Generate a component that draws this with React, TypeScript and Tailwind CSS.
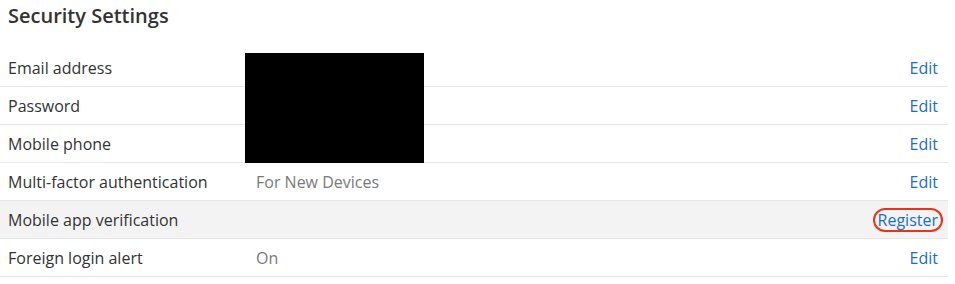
const rows = [
  { label: "Email address", value: "", action: "Edit" },
  { label: "Password", value: "", action: "Edit" },
  { label: "Mobile phone", value: "", action: "Edit" },
  { label: "Multi-factor authentication", value: "For New Devices", action: "Edit" },
  { label: "Mobile app verification", value: "", action: "Register", highlight: true },
  { label: "Foreign login alert", value: "On", action: "Edit" },
];

export default function App() {
  return (
    <div className="w-[948px] bg-white font-['Open_Sans',sans-serif] text-[#333]">
      <h2 className="h-[49px] pl-2 pt-[2px] text-[20px] font-semibold leading-[28px] text-[#333]">
        Security Settings
      </h2>
      <div className="relative">
        {rows.map((row) => (
          <div
            key={row.label}
            className={`flex h-[38px] items-center border-b border-[#e6e6e6] pr-[10px] pl-2 text-[16px] ${
              row.highlight ? "bg-[#f3f3f3]" : ""
            }`}
          >
            <span className="w-[248px] shrink-0">{row.label}</span>
            <span className="flex-1 text-[#7a7a7a]">{row.value}</span>
            {row.highlight ? (
              <a className="-mr-[5px] rounded-full border-2 border-[#e8341c] px-[3px] leading-[20px] text-[#1b6ec2]">
                {row.action}
              </a>
            ) : (
              <a className="text-[#1b6ec2]">{row.action}</a>
            )}
          </div>
        ))}
        {/* redacted values */}
        <div className="absolute top-[4px] left-[245px] h-[110px] w-[179px] bg-black" />
      </div>
    </div>
  );
}
